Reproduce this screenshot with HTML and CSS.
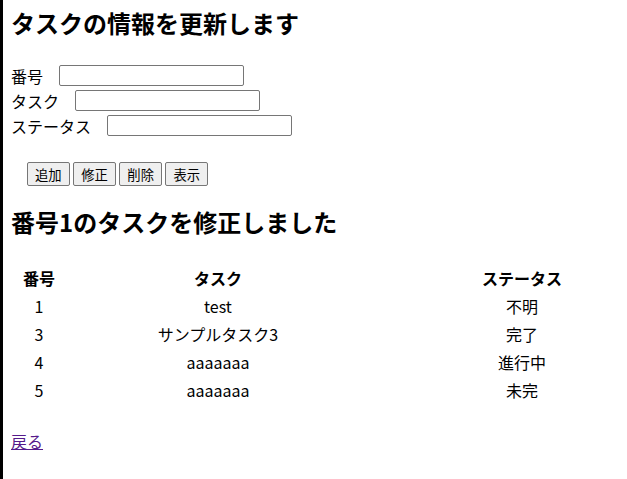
FILE: index.html
```html
<!DOCTYPE html>
<html lang="ja">
<head>
<meta charset="utf-8">
<title>タスク更新</title>
<link rel="stylesheet" href="styles.css">
</head>
<body>
<h2 class="title">タスクの情報を更新します</h2>
<form class="task-form">
  <div class="field"><label class="field-label">番号</label><input class="field-input" type="text"></div>
  <div class="field"><label class="field-label">タスク</label><input class="field-input" type="text"></div>
  <div class="field"><label class="field-label">ステータス</label><input class="field-input" type="text"></div>
  <div class="actions">
    <button class="btn" type="button">追加</button>
    <button class="btn" type="button">修正</button>
    <button class="btn" type="button">削除</button>
    <button class="btn" type="button">表示</button>
  </div>
</form>
<h2 class="title result">番号1のタスクを修正しました</h2>
<div class="table-wrap">
  <table class="task-table">
    <thead>
      <tr><th class="col-id">番号</th><th class="col-task">タスク</th><th class="col-status">ステータス</th></tr>
    </thead>
    <tbody>
      <tr><td>1</td><td>test</td><td>不明</td></tr>
      <tr><td>3</td><td>サンプルタスク3</td><td>完了</td></tr>
      <tr><td>4</td><td>aaaaaaa</td><td>進行中</td></tr>
      <tr><td>5</td><td>aaaaaaa</td><td>未完</td></tr>
    </tbody>
  </table>
</div>
<p class="back"><a class="back-link" href="#">戻る</a></p>
</body>
</html>
```
FILE: styles.css
```css
html {
  border-left: 3px solid #000;
  min-height: 100%;
  background: #fff;
}
body {
  margin: 5px 8px 8px 8px;
  font-family: "Noto Sans CJK JP", "Noto Sans", sans-serif;
  font-size: 16px;
  color: #000;
}
.title {
  font-size: 24px;
  font-weight: bold;
  margin: 0 0 23px 0;
}
.task-form {
  margin: 0;
}
.field {
  display: flex;
  align-items: center;
  height: 25px;
}
.field-label {
  margin-right: 16px;
}
.field-input {
  box-sizing: border-box;
  width: 185px;
  height: 21px;
  border: 1px solid #767676;
  border-radius: 2px;
  padding: 1px 2px;
  font-family: "Noto Sans CJK JP", sans-serif;
  font-size: 13.33px;
  margin: 0;
}
.actions {
  display: flex;
  gap: 3.5px;
  margin: 24px 0 0 16px;
}
.btn {
  box-sizing: border-box;
  height: 24px;
  font-family: "Noto Sans CJK JP", sans-serif;
  font-size: 13.33px;
  padding: 0 7px;
  border: 1px solid #767676;
  border-radius: 2px;
  background: #efefef;
  color: #000;
  line-height: normal;
  margin: 0;
}
.result {
  margin-top: 18px;
}
.table-wrap {
  overflow: hidden;
}
.task-table {
  table-layout: fixed;
  width: 664px;
  border-spacing: 2px;
  line-height: 24px;
  margin-top: 1px;
}
.task-table th,
.task-table td {
  padding: 1px;
  text-align: center;
}
.col-id { width: 50px; }
.col-task { width: 300px; }
.col-status { width: 300px; }
.back {
  margin: 24px 0 0 0;
}
.back-link {
  color: #551a8b;
}
```
